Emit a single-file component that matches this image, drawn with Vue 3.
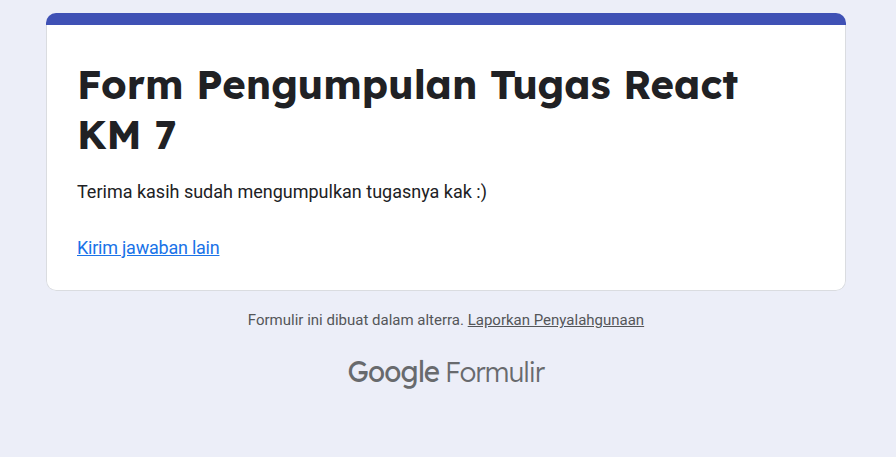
<script setup>
const title = ['Form Pengumpulan Tugas React', 'KM 7']
</script>

<template>
  <main class="page">
    <section class="card">
      <div class="accent"></div>
      <div class="content">
        <h1 class="title"><span v-for="line in title" :key="line">{{ line }}</span></h1>
        <p class="message">Terima kasih sudah mengumpulkan tugasnya kak :)</p>
        <a class="again" href="#">Kirim jawaban lain</a>
      </div>
    </section>
    <p class="notice">Formulir ini dibuat dalam alterra. <a href="#">Laporkan Penyalahgunaan</a></p>
    <svg class="brand" width="200" height="36" viewBox="0 0 200 36" role="img" aria-label="Google Formulir">
      <text class="google" x="0.4" y="26.5" textLength="92" lengthAdjust="spacingAndGlyphs">Google</text>
      <text class="forms" x="98" y="27" textLength="99.4" lengthAdjust="spacingAndGlyphs">Formulir</text>
    </svg>
  </main>
</template>

<style>
body { background: #eceef8; }
</style>

<style scoped>
.page { box-sizing: border-box; height: 457px; padding: 13px 50px 0 46px; font-family: Roboto, sans-serif; overflow: hidden; background: #eceef8; }
.card { box-sizing: border-box; height: 278px; border-radius: 10px; overflow: hidden; display: flex; flex-direction: column; }
.accent { height: 12px; background: #3f51b5; }
.content { flex: 1; padding: 34px 30px 0; background: #fff; border: 1px solid #dadce0; border-top: 0; border-radius: 0 0 10px 10px; }
.title { margin: 0; font: 700 40px/50px Lexend, Inter, sans-serif; color: #202124; white-space: nowrap; }
.title span { display: block; }
.message { margin: 21px 0 0; font-size: 18px; line-height: 24px; color: #202124; }
.again { display: inline-block; margin-top: 32px; font-size: 18px; line-height: 24px; letter-spacing: -0.23px; color: #1a73e8; }
.notice { margin: 18px 0 0; text-align: center; font-size: 15px; line-height: 22px; color: #545659; }
.notice a { color: inherit; }
.brand { display: block; margin: 24px 0 0 301px; overflow: visible; font-family: Lexend, Roboto, sans-serif; fill: #686a6d; }
.google { font-size: 30px; font-weight: 450; letter-spacing: -0.8px; }
.forms { font-size: 28px; font-weight: 300; letter-spacing: -0.8px; }
</style>
